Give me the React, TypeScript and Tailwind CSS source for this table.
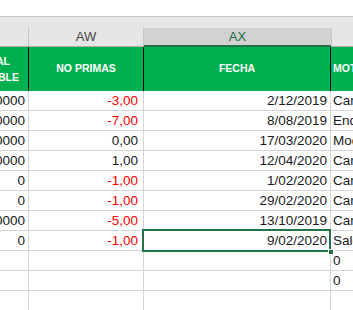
import React from "react";

type Row = { tot: string; np: string; neg: boolean; fecha: string; mot: string };

const ROWS: Row[] = [
  { tot: "10,00000", np: "-3,00", neg: true, fecha: "2/12/2019", mot: "Cambio" },
  { tot: "10,00000", np: "-7,00", neg: true, fecha: "8/08/2019", mot: "Endoso" },
  { tot: "10,00000", np: "0,00", neg: false, fecha: "17/03/2020", mot: "Modif" },
  { tot: "10,00000", np: "1,00", neg: false, fecha: "12/04/2020", mot: "Cancel" },
  { tot: "0", np: "-1,00", neg: true, fecha: "1/02/2020", mot: "Cancel" },
  { tot: "0", np: "-1,00", neg: true, fecha: "29/02/2020", mot: "Cancel" },
  { tot: "10,00000", np: "-5,00", neg: true, fecha: "13/10/2019", mot: "Cancel" },
  { tot: "0", np: "-1,00", neg: true, fecha: "9/02/2020", mot: "Saldo" },
];

const cell = "h-[20px] border-b border-r border-[#d4d4d4] flex items-end pb-[1px] overflow-hidden whitespace-nowrap";

export default function App() {
  return (
    <div
      className="w-[353px] h-[310px] overflow-hidden bg-white text-[#1a1a1a]"
      style={{ fontFamily: '"Liberation Sans", Arial, sans-serif' }}
    >
      {/* ribbon gap */}
      <div className="h-[16px] bg-white" />

      {/* column letters */}
      <div className="h-[31px] border-t border-b border-t-[#c6c6c6] border-b-[#ababab] bg-[#e6e6e6] flex items-end text-[13px] text-[#444]">
        <div className="w-[29px] h-[19px] border-r border-[#c6c6c6]" />
        <div className="w-[115px] h-[19px] border-r border-[#c6c6c6] flex items-center justify-center">AW</div>
        <div className="w-[187px] h-[19px] bg-[#d2d2d2] border-b-2 border-[#217346] -mb-[1px] flex items-center justify-center text-[#1f6b45]">
          AX
        </div>
        <div className="flex-1 h-[19px] border-l border-[#c6c6c6]" />
      </div>

      {/* green header */}
      <div className="h-[44px] bg-[#00b050] flex text-white font-bold text-[10.5px]">
        <div className="w-[29px] border-r border-black flex flex-col justify-center items-end overflow-hidden leading-[16px] whitespace-nowrap">
          <span className="mr-[18px]">TOTAL</span>
          <span className="mr-[9px]">DISPONIBLE</span>
        </div>
        <div className="w-[115px] border-r border-black flex items-center justify-center">NO PRIMAS</div>
        <div className="w-[187px] border-r border-black flex items-center justify-center">FECHA</div>
        <div className="flex-1 flex items-center pl-[2px] overflow-hidden whitespace-nowrap">MOTIVO</div>
      </div>

      {/* data */}
      <div className="text-[13.5px] leading-[16px]">
        {ROWS.map((r, i) => (
          <div key={i} className="flex">
            <div className={`${cell} w-[29px] justify-end pr-[3px]`}>{r.tot}</div>
            <div className={`${cell} w-[115px] justify-end pr-[5px] ${r.neg ? "text-[#ff0000]" : ""}`}>{r.np}</div>
            <div className={`${cell} w-[187px] justify-end pr-[3px] relative ${i === 7 ? "overflow-visible" : ""}`}>
              {r.fecha}
              {i === 7 && (
                <>
                  <div className="absolute -left-[2px] -top-[2px] -right-[1px] -bottom-[2px] border-2 border-[#217346] pointer-events-none" />
                  <div className="absolute -right-[4px] -bottom-[5px] w-[6px] h-[6px] bg-[#217346] border border-white" />
                </>
              )}
            </div>
            <div className={`${cell} flex-1 border-r-0 pl-[2px]`}>{r.mot}</div>
          </div>
        ))}
        {[0, 1, 2].map((i) => (
          <div key={`e${i}`} className="flex">
            <div className={`${cell} w-[29px]`} />
            <div className={`${cell} w-[115px]`} />
            <div className={`${cell} w-[187px]`} />
            <div className={`${cell} flex-1 border-r-0 pl-[2px]`}>{i < 2 ? "0" : ""}</div>
          </div>
        ))}
      </div>
    </div>
  );
}
